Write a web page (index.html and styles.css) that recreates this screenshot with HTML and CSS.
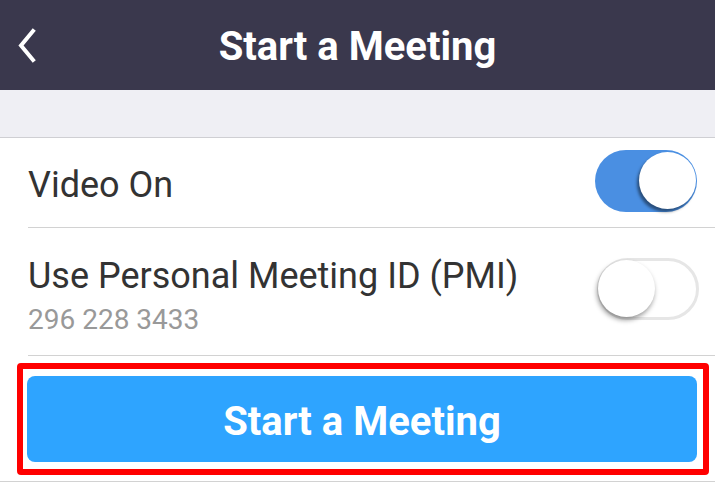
FILE: index.html
```html
<!DOCTYPE html>
<html lang="en">
<head>
    <meta charset="UTF-8">
    <meta name="viewport" content="width=device-width, initial-scale=1.0">
    <title>Start a Meeting</title>
    <link rel="stylesheet" href="styles.css">
</head>
<body>
    <!-- Barra superior -->
    <header class="topbar">
        <span class="back">
            <svg width="24" height="36" viewBox="0 0 24 36">
                <path d="M17 3 L5 17.5 L17 32" fill="none" stroke="#fff" stroke-width="4" stroke-linecap="square"/>
            </svg>
        </span>
        <h1 class="title">Start a Meeting</h1>
        <span></span>
    </header>

    <div class="band"></div>

    <!-- Opções -->
    <div class="row row-video">
        <div class="label">Video On</div>
        <div class="toggle on"><span class="knob"></span></div>
    </div>
    <div class="row row-pmi">
        <div class="texts">
            <div class="label">Use Personal Meeting ID (PMI)</div>
            <div class="sub">296 228 3433</div>
        </div>
        <div class="toggle off"><span class="knob"></span></div>
    </div>

    <div class="actions">
        <div class="highlight">
            <button class="start-btn">Start a Meeting</button>
        </div>
    </div>
</body>
</html>
```

FILE: styles.css
```css
/* Estilo da tela */
body {
    margin: 0;
    width: 715px;
    font-family: 'Roboto', 'Liberation Sans', sans-serif;
    background: #fff;
    color: #333;
}
.topbar {
    height: 90px;
    background: #3a384d;
    display: grid;
    grid-template-columns: 60px 1fr 60px;
    align-items: center;
}
.back {
    display: flex;
    padding-left: 16px;
    padding-top: 2px;
}
.title {
    margin: 0;
    padding-top: 3px;
    text-align: center;
    color: #fff;
    font-size: 40px;
    font-weight: 700;
}
.band {
    height: 47px;
    background: #efeff4;
    border-bottom: 1px solid #cfcfd3;
}
.row {
    margin-left: 28px;
    border-bottom: 1px solid #d2d2d2;
    display: flex;
    align-items: center;
    justify-content: space-between;
    padding-right: 18px;
}
.row-video {
    height: 89px;
}
.row-pmi {
    height: 127px;
}
.label {
    font-size: 36px;
    line-height: 42px;
    color: #333;
}
.row-video .label {
    padding-top: 5px;
}
.texts {
    display: flex;
    flex-direction: column;
    gap: 6px;
    padding-top: 9px;
}
.sub {
    font-size: 28px;
    line-height: 34px;
    color: #999;
}
.toggle {
    box-sizing: border-box;
    width: 102px;
    height: 62px;
    border-radius: 31px;
    display: flex;
    align-items: center;
}
.toggle.on {
    background: #4a8fe2;
    justify-content: flex-end;
    padding: 0 1px;
    margin-bottom: 4px;
}
.toggle.off {
    background: #fff;
    border: 3px solid #e6e6e6;
    padding: 0 1px;
    margin-right: -2px;
    margin-bottom: 6px;
}
.knob {
    width: 57px;
    height: 57px;
    border-radius: 50%;
    background: #fff;
}
.toggle.on .knob {
    box-shadow: -2px 3px 3px rgba(0, 0, 0, 0.45);
}
.toggle.off .knob {
    margin-left: -3px;
    box-shadow: -1px 3px 5px rgba(0, 0, 0, 0.4);
}
.actions {
    height: 126px;
    border-bottom: 1px solid #d2d2d2;
    padding-top: 7px;
    box-sizing: border-box;
}
.highlight {
    margin-left: 17px;
    width: 692px;
    box-sizing: border-box;
    border: 6px solid #ff0000;
    border-radius: 4px;
    padding: 7px 6px 7px 4px;
}
.start-btn {
    display: block;
    width: 100%;
    height: 86px;
    padding-top: 5px;
    border: none;
    border-radius: 8px;
    background: #2ea4ff;
    color: #fff;
    font-family: 'Roboto', 'Liberation Sans', sans-serif;
    font-size: 40px;
    font-weight: 700;
    cursor: pointer;
}
```
